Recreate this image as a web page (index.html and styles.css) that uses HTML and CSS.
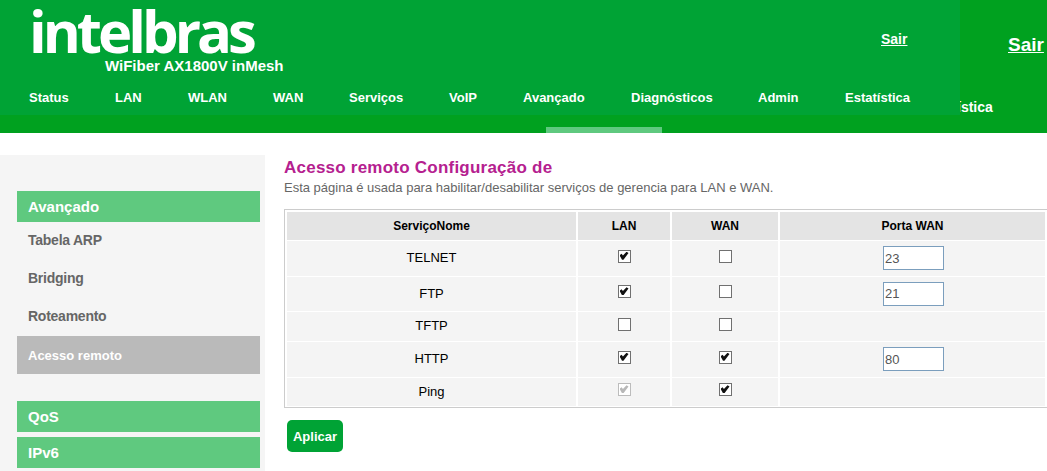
FILE: index.html
```html
<!DOCTYPE html>
<html lang="pt-BR">
<head>
  <meta charset="UTF-8">
  <title>WiFiber AX1800V inMesh</title>
  <link rel="stylesheet" href="styles.css">
</head>
<body>
  <div class="topbar">
    <div class="back-sair"><a href="#">Sair</a></div>
    <div class="back-tab">ística</div>
    <div class="tab-mark"></div>
    <div class="panel">
      <div class="brand">
        <div class="logo">intelbras</div>
        <div class="model">WiFiber AX1800V inMesh</div>
        <a class="logout" href="#">Sair</a>
      </div>
      <ul class="nav">
        <li class="n1">Status</li>
        <li class="n2">LAN</li>
        <li class="n3">WLAN</li>
        <li class="n4">WAN</li>
        <li class="n5">Serviços</li>
        <li class="n6">VoIP</li>
        <li class="n7">Avançado</li>
        <li class="n8">Diagnósticos</li>
        <li class="n9">Admin</li>
        <li class="n10">Estatística</li>
      </ul>
    </div>
  </div>

  <div class="main">
    <aside class="side">
      <div class="side-head">Avançado</div>
      <a class="side-link" href="#">Tabela ARP</a>
      <a class="side-link" href="#">Bridging</a>
      <a class="side-link" href="#">Roteamento</a>
      <a class="side-link active" href="#">Acesso remoto</a>
      <div class="side-head second">QoS</div>
      <div class="side-head third">IPv6</div>
    </aside>

    <section class="content">
      <h1>Acesso remoto Configuração de</h1>
      <p class="intro">Esta página é usada para habilitar/desabilitar serviços de gerencia para LAN e WAN.</p>
      <div class="table-box">
        <table>
          <tr class="r0">
            <th class="c1">ServiçoNome</th>
            <th class="c2">LAN</th>
            <th class="c3">WAN</th>
            <th class="c4">Porta WAN</th>
          </tr>
          <tr class="r1">
            <td>TELNET</td>
            <td><input type="checkbox" checked></td>
            <td><input type="checkbox"></td>
            <td><input class="port" type="text" value="23"></td>
          </tr>
          <tr class="r2">
            <td>FTP</td>
            <td><input type="checkbox" checked></td>
            <td><input type="checkbox"></td>
            <td><input class="port" type="text" value="21"></td>
          </tr>
          <tr class="r3">
            <td>TFTP</td>
            <td><input type="checkbox"></td>
            <td><input type="checkbox"></td>
            <td></td>
          </tr>
          <tr class="r4">
            <td>HTTP</td>
            <td><input type="checkbox" checked></td>
            <td><input type="checkbox" checked></td>
            <td><input class="port" type="text" value="80"></td>
          </tr>
          <tr class="r5">
            <td>Ping</td>
            <td><input type="checkbox" checked disabled></td>
            <td><input type="checkbox" checked></td>
            <td></td>
          </tr>
        </table>
      </div>
      <button class="apply">Aplicar</button>
    </section>
  </div>
</body>
</html>
```

FILE: styles.css
```css
html, body {
  margin: 0;
  padding: 0;
  height: 471px;
  overflow: hidden;
  background: #fff;
  font-family: "Liberation Sans", Arial, sans-serif;
}

/* header */
.topbar {
  position: relative;
  height: 133px;
  background: #00a11f;
  overflow: hidden;
  color: #fff;
}

.back-sair {
  position: absolute;
  left: 1008px;
  top: 34px;
  font-size: 19px;
  font-weight: bold;
}

.back-sair a, .logout {
  color: #fff;
}

.back-tab {
  position: absolute;
  left: 957px;
  top: 99px;
  font-size: 14px;
  font-weight: bold;
}

.tab-mark {
  position: absolute;
  left: 546px;
  top: 127px;
  width: 116px;
  height: 6px;
  background: #5fc97f;
}

.panel {
  position: absolute;
  left: 0;
  top: 0;
  width: 960px;
  height: 115px;
  background: #00a335;
}

.brand {
  position: relative;
  height: 85px;
}

.logo {
  position: absolute;
  left: 29px;
  top: 11px;
  height: 40px;
  font-family: "Open Sans", sans-serif;
  font-size: 58px;
  font-weight: 700;
  letter-spacing: -4px;
  line-height: 40px;
}

.model {
  position: absolute;
  left: 105px;
  top: 57px;
  font-size: 15px;
  font-weight: bold;
}

.logout {
  position: absolute;
  left: 881px;
  top: 31px;
  font-size: 14px;
  font-weight: bold;
}

.nav {
  display: flex;
  margin: 0;
  padding: 5px 0 0 29px;
  list-style: none;
  font-size: 13px;
  font-weight: bold;
}

.n1 { width: 86px; }
.n2 { width: 73px; }
.n3 { width: 85px; }
.n4 { width: 76px; }
.n5 { width: 100px; }
.n6 { width: 74px; }
.n7 { width: 108px; }
.n8 { width: 127px; }
.n9 { width: 87px; }

/* page body */
.main {
  display: flex;
  padding-top: 22px;
}

.side {
  width: 243px;
  height: 280px;
  padding: 36px 5px 0 17px;
  background: #f5f5f5;
  flex-shrink: 0;
}

.side-head {
  height: 31px;
  padding-left: 11px;
  background: #5fc97f;
  color: #fff;
  font-size: 15px;
  font-weight: bold;
  line-height: 31px;
}

.second {
  margin-top: 27px;
}

.third {
  margin-top: 5px;
}

.side-link {
  display: block;
  height: 38px;
  padding-left: 11px;
  color: #666;
  font-size: 14px;
  font-weight: bold;
  letter-spacing: -0.25px;
  line-height: 37px;
  text-decoration: none;
}

.active {
  background: #bababa;
  color: #fff;
  font-size: 13px;
  letter-spacing: 0;
  line-height: 39px;
}

.content {
  padding-left: 19px;
  flex-grow: 1;
  min-width: 0;
}

h1 {
  margin: 3px 0 0;
  color: #b5208f;
  font-size: 17px;
  line-height: 20px;
  letter-spacing: 0.23px;
}

.intro {
  margin: 2px 0 0;
  color: #666;
  font-size: 13px;
  line-height: 16px;
}

.table-box {
  margin-top: 13px;
  padding-top: 1px;
  border: 1px solid #ccc;
  border-right: 0;
}

table {
  border-collapse: separate;
  border-spacing: 2px 1px;
  table-layout: fixed;
  width: 762px;
}

th {
  padding: 0;
  background: #e4e4e4;
  font-size: 12px;
  color: #000;
}

td {
  padding: 0 0 2px;
  background: #f4f4f4;
  font-size: 13px;
  color: #000;
  text-align: center;
}

.c1 { width: 289px; }
.c2 { width: 92px; }
.c3 { width: 106px; }
.c4 { width: 265px; }

.r0 { height: 28px; }
.r1 { height: 35px; }
.r2 { height: 34px; }
.r3 { height: 29px; }
.r4 { height: 35px; }
.r5 { height: 28px; }

input[type="checkbox"] {
  appearance: none;
  position: relative;
  display: inline-block;
  box-sizing: border-box;
  width: 13px;
  height: 13px;
  margin: 0 0 3px;
  vertical-align: middle;
  border: 1px solid #707070;
  background: #fff;
}

input[type="checkbox"]:checked::after {
  content: "";
  position: absolute;
  left: 1px;
  top: 1px;
  width: 9px;
  height: 8px;
  background: #111;
  clip-path: polygon(0 42%, 24% 24%, 38% 46%, 78% 0, 100% 16%, 44% 100%, 28% 100%);
}

input[type="checkbox"]:disabled {
  border-color: #bcbcbc;
}

input[type="checkbox"]:disabled::after {
  background: #b8b8b8;
}

.port {
  box-sizing: border-box;
  display: block;
  width: 61px;
  height: 24px;
  margin: 1px 0 0 103px;
  padding: 0 1px;
  border: 1px solid #7b9ebd;
  color: #555;
  font-family: "Liberation Sans", Arial, sans-serif;
  font-size: 13px;
}

.apply {
  display: block;
  width: 56px;
  height: 32px;
  margin: 12px 0 0 3px;
  padding: 0;
  border: 0;
  border-radius: 5px;
  background: #00a335;
  color: #fff;
  font-family: "Liberation Sans", Arial, sans-serif;
  font-size: 13px;
  font-weight: bold;
}
```
